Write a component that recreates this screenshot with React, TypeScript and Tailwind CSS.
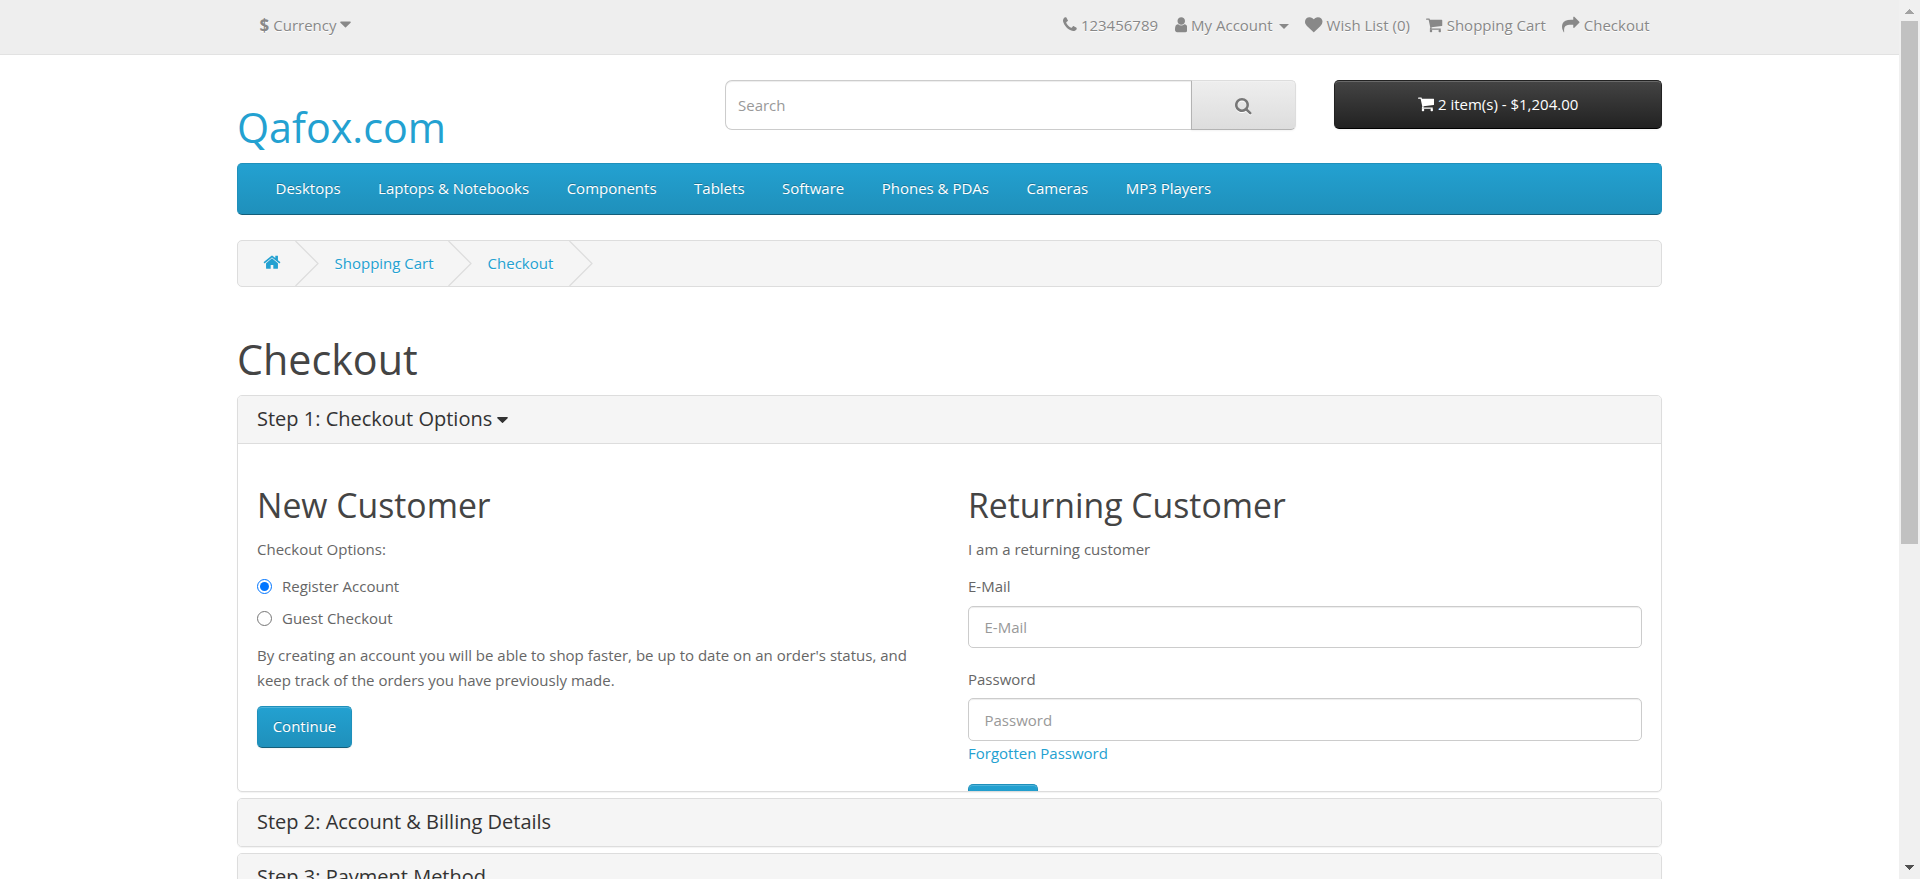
import React from "react";

type IconProps = { box: string; d: string; className: string };

const Icon = ({ box, d, className }: IconProps) => (
  <svg viewBox={box} className={`block shrink-0 ${className}`} fill="currentColor" aria-hidden="true">
    <path d={d} />
  </svg>
);

const PHONE =
  "M1600 1240q0 27-10 70.5t-21 68.5q-21 50-122 106-94 51-186 51-27 0-52.5-3.5t-57.5-12.5-47.5-14.5-55.5-20.5-49-18q-98-35-175-83-128-79-264.5-215.5t-215.5-264.5q-48-77-83-175-3-9-18-49t-20.5-55.5-14.5-47.5-12.5-57.5-3.5-52.5q0-92 51-186 56-101 106-122 25-11 68.5-21t70.5-10q14 0 21 3 18 6 53 76 11 19 30 54t35 63.5 31 53.5q3 4 17.5 25t21.5 35.5 7 28.5q0 20-28.5 50t-62 55-62 53-28.5 46q0 9 5 22.5t8.5 20.5 14 24 11.5 19q76 137 174 235t235 174q2 1 19 11.5t24 14 20.5 8.5 22.5 5q18 0 46-28.5t53-62 55-62 50-28.5q14 0 28.5 7t35.5 21.5 25 17.5q25 15 53.5 31t63.5 35 54 30q70 35 76 53 3 7 3 21z";
const USER =
  "M1536 1399q0 109-62.5 187t-150.5 78h-854q-88 0-150.5-78t-62.5-187q0-85 8.5-160.5t31.5-152 58.5-131 94-89 134.5-34.5q131 128 313 128t313-128q76 0 134.5 34.5t94 89 58.5 131 31.5 152 8.5 160.5zm-256-887q0 159-112.5 271.5t-271.5 112.5-271.5-112.5-112.5-271.5 112.5-271.5 271.5-112.5 271.5 112.5 112.5 271.5z";
const HEART =
  "M896 1664q-26 0-44-18l-624-602q-10-8-27.5-26t-55.5-65.5-68-97.5-53.5-121-23.5-138q0-220 127-344t351-124q62 0 126.5 21.5t120 58 95.5 68.5 76 68q36-36 76-68t95.5-68.5 120-58 126.5-21.5q224 0 351 124t127 344q0 221-229 450l-623 600q-18 18-44 18z";
const CART =
  "M704 1536q0 52-38 90t-90 38-90-38-38-90 38-90 90-38 90 38 38 90zm896 0q0 52-38 90t-90 38-90-38-38-90 38-90 90-38 90 38 38 90zm128-1088v512q0 24-16.5 42.5t-40.5 21.5l-1044 122q13 60 13 70 0 16-24 64h920q26 0 45 19t19 45-19 45-45 19h-1024q-26 0-45-19t-19-45q0-11 8-31.5t16-36 21.5-40 15.5-29.5l-177-823h-204q-26 0-45-19t-19-45 19-45 45-19h256q16 0 28.5 6.5t19.5 15.5 13 24.5 8 26 5.5 29.5 4.5 26h1201q26 0 45 19t19 45z";
const SHARE =
  "M1792 640q0 26-19 45l-512 512q-19 19-45 19t-45-19-19-45v-256h-224q-98 0-175.5 6t-154 21.5-133 42.5-105.5 69.5-80 101-48.5 138.5-17.5 181q0 55 5 123 0 6 2.5 23.5t2.5 26.5q0 15-8.5 25t-23.5 10q-16 0-28-17-7-9-13-22t-13.5-30-10.5-24q-127-285-127-451 0-199 53-333 162-403 875-403h224v-256q0-26 19-45t45-19 45 19l512 512q19 19 19 45z";
const HOME =
  "M1472 992v480q0 26-19 45t-45 19h-384v-384h-256v384h-384q-26 0-45-19t-19-45v-480q0-1 .5-3t.5-3l575-474 575 474q1 2 1 6zm223-69l-62 74q-8 9-21 11h-3q-13 0-21-7l-692-577-692 577q-12 8-24 7-13-2-21-11l-62-74q-8-10-7-23.5t11-21.5l719-599q32-26 76-26t76 26l244 204v-195q0-14 9-23t23-9h192q14 0 23 9t9 23v408l219 182q10 8 11 21.5t-7 23.5z";
const SEARCH =
  "M1216 832q0-185-131.5-316.5t-316.5-131.5-316.5 131.5-131.5 316.5 131.5 316.5 316.5 131.5 316.5-131.5 131.5-316.5zm512 832q0 52-38 90t-90 38q-54 0-90-38l-343-342q-179 124-399 124-143 0-273.5-55.5t-225-150-150-225-55.5-273.5 55.5-273.5 150-225 225-150 273.5-55.5 273.5 55.5 225 150 150 225 55.5 273.5q0 220-124 399l343 343q37 37 37 90z";
const CARET =
  "M1408 704q0 26-19 45l-448 448q-19 19-45 19t-45-19l-448-448q-19-19-19-45t19-45 45-19h896q26 0 45 19t19 45z";

const menu = [
  "Desktops",
  "Laptops & Notebooks",
  "Components",
  "Tablets",
  "Software",
  "Phones & PDAs",
  "Cameras",
  "MP3 Players",
];

const blueButton =
  "rounded-[5px] border border-[#1f90bb] border-b-[#145e7a] bg-linear-to-b from-[#23a1d1] to-[#1f90bb] text-white shadow-[inset_0_1px_0_rgba(255,255,255,0.2),0_1px_2px_rgba(0,0,0,0.05)] [text-shadow:0_-1px_0_rgba(0,0,0,0.25)]";

const fieldClass =
  "block w-full rounded-[5px] border border-[#ccc] bg-white px-[15.5px] text-[15px] text-[#555] shadow-[inset_0_1px_1px_rgba(0,0,0,0.075)] outline-none placeholder:text-[#999]";

const Chevron = () => (
  <svg width="24" height="45" viewBox="0 0 24 45" fill="none" stroke="#ddd" strokeWidth="1.2" className="block shrink-0">
    <path d="M0.5 0L23 22.5L0.5 45" />
  </svg>
);

const TopBar = () => (
  <nav className="h-[55px] border-b border-[#e2e2e2] bg-[#eee] text-[#888] [text-shadow:0_1px_0_#fff]">
    <div className="mx-auto flex w-[1425px] justify-between pt-[13px] pr-[12.5px] pl-[22.5px] leading-[25px]">
      <div className="flex items-center">
        <strong className="mr-[4px] text-[17px] leading-[25px] font-bold">$</strong>
        <span>Currency</span>
        <Icon box="384 0 1024 1792" d={CARET} className="mb-[2px] ml-[3.5px] h-[18.5px] w-[11px]" />
      </div>
      <ul className="flex items-center">
        <li className="flex items-center">
          <Icon box="192 0 1408 1792" d={PHONE} className="mr-[4px] mb-[2px] h-[17.5px] w-[13.75px]" />
          <span>123456789</span>
        </li>
        <li className="ml-[16.5px] flex items-center">
          <Icon box="256 0 1280 1792" d={USER} className="mr-[4px] mb-[2px] h-[17.5px] w-[12.5px]" />
          <span>My Account</span>
          <span className="mt-[1px] ml-[6px] h-0 w-0 border-x-[5px] border-t-[5px] border-x-transparent border-t-[#888]" />
        </li>
        <li className="ml-[16.5px] flex items-center">
          <Icon box="0 0 1792 1792" d={HEART} className="mr-[4px] mb-[2px] h-[17.5px] w-[17.5px]" />
          <span>Wish List (0)</span>
        </li>
        <li className="ml-[16.5px] flex items-center">
          <Icon box="64 0 1664 1792" d={CART} className="mr-[4px] mb-[2px] h-[17.5px] w-[16.25px]" />
          <span>Shopping Cart</span>
        </li>
        <li className="ml-[16.5px] flex items-center">
          <Icon box="0 0 1792 1792" d={SHARE} className="mr-[4px] mb-[2px] h-[17.5px] w-[17.5px]" />
          <span>Checkout</span>
        </li>
      </ul>
    </div>
  </nav>
);

const Header = () => (
  <header className="mx-auto flex h-[108px] w-[1425px] items-start">
    <h1 className="w-[488px] pt-[50px] text-[41.25px] leading-[45px] text-[#23a1d1]">Qafox.com</h1>
    <div className="mt-[25px] flex h-[50px] w-[571px]">
      <input
        placeholder="Search"
        className="h-[50px] w-[466px] rounded-l-[7px] border border-r-0 border-[#ccc] px-[12px] text-[15px] shadow-[inset_0_1px_1px_rgba(0,0,0,0.075)] outline-none placeholder:text-[#999]"
      />
      <button className="flex flex-1 items-center justify-center rounded-r-[5px] border border-[#ddd] border-b-[#b3b3b3] border-l-[#b3b3b3] bg-linear-to-b from-[#eee] to-[#ddd] text-[#777] shadow-[inset_0_1px_0_rgba(255,255,255,0.2),0_1px_2px_rgba(0,0,0,0.05)]">
        <Icon box="64 128 1664 1664" d={SEARCH} className="mt-[3px] h-[16.5px] w-[16.5px] drop-shadow-[0_1px_0_#fff]" />
      </button>
    </div>
    <button className="mt-[25px] ml-auto flex h-[49px] w-[328px] items-center justify-center rounded-[5px] border border-[#222] border-b-black bg-linear-to-b from-[#444] to-[#222] leading-[25px] text-white shadow-[inset_0_1px_0_rgba(255,255,255,0.2),0_1px_2px_rgba(0,0,0,0.05)]">
      <Icon box="64 0 1664 1792" d={CART} className="mr-[4px] mb-[2px] h-[17.5px] w-[16.25px]" />
      <span>2 item(s) - $1,204.00</span>
    </button>
  </header>
);

const Breadcrumb = () => (
  <ul className="mt-[25px] flex h-[47px] items-center rounded-[5px] border border-[#ddd] bg-[#f5f5f5] pl-[25px] text-[#23a1d1] [text-shadow:0_1px_0_#fff]">
    <li className="flex items-center">
      <Icon box="64 0 1664 1792" d={HOME} className="mr-[14px] mb-[2px] h-[18.5px] w-[18px]" />
      <Chevron />
    </li>
    <li className="flex items-center pl-[15.5px]">
      <span className="mr-[14.5px]">Shopping Cart</span>
      <Chevron />
    </li>
    <li className="flex items-center pl-[15.5px]">
      <span className="mr-[15.5px]">Checkout</span>
      <Chevron />
    </li>
  </ul>
);

const panel = "overflow-hidden rounded-[5px] border border-[#ddd] bg-white shadow-[0_1px_1px_rgba(0,0,0,0.05)]";

const ClosedStep = ({ title }: { title: string }) => (
  <section className={`mt-[6px] h-[49px] shrink-0 ${panel}`}>
    <h4 className="h-full bg-[#f5f5f5] pt-[12px] pl-[19px] text-[20px] leading-[22px] text-[#333]">{title}</h4>
  </section>
);

const NewCustomer = () => (
  <div className="w-[674px]">
    <h2 className="text-[33.75px] leading-[37px] text-[#444]">New Customer</h2>
    <p className="mt-[12.5px]">Checkout Options:</p>
    <label className="mt-[12.5px] flex items-center">
      <span className="flex h-[15px] w-[15px] items-center justify-center rounded-full border-[1.5px] border-[#0075ff] bg-white">
        <span className="h-[9px] w-[9px] rounded-full bg-[#0075ff]" />
      </span>
      <span className="ml-[10px]">Register Account</span>
    </label>
    <label className="mt-[7px] flex items-center">
      <span className="h-[15px] w-[15px] rounded-full border border-[#767676] bg-white" />
      <span className="ml-[10px]">Guest Checkout</span>
    </label>
    <p className="mt-[12px]">
      By creating an account you will be able to shop faster, be up to date on an order's status, and keep track of the
      orders you have previously made.
    </p>
    <button className={`mt-[13px] h-[42px] w-[95px] pb-[2px] ${blueButton}`}>Continue</button>
  </div>
);

const ReturningCustomer = () => (
  <div className="w-[674px]">
    <h2 className="text-[33.75px] leading-[37px] text-[#444]">Returning Customer</h2>
    <p className="mt-[12.5px]">I am a returning customer</p>
    <label className="mt-[12.5px] block">E-Mail</label>
    <input placeholder="E-Mail" className={`mt-[7px] h-[42px] ${fieldClass}`} />
    <label className="mt-[19px] block">Password</label>
    <input placeholder="Password" className={`mt-[6px] h-[43px] ${fieldClass}`} />
    <a className="block text-[#23a1d1]">Forgotten Password</a>
    <button className={`mt-[18px] block h-[42px] w-[70px] ${blueButton}`} />
  </div>
);

export default function App() {
  return (
    <div className="flex h-[879px] w-full overflow-hidden bg-white font-['Open_Sans',sans-serif] text-[15px] leading-[25px] font-normal text-[#666]">
      <div className="h-full flex-1 overflow-hidden">
        <TopBar />
        <Header />
        <main className="mx-auto w-[1425px]">
          <nav className="flex h-[52px] items-center rounded-[5px] border border-[#1f90bb] border-b-[#145e7a] bg-linear-to-b from-[#23a1d1] to-[#1f90bb] pb-[2px] pl-[18.75px] text-white [text-shadow:0_-1px_0_rgba(0,0,0,0.25)]">
            {menu.map((label) => (
              <a key={label} className="px-[18.75px]">
                {label}
              </a>
            ))}
          </nav>
          <Breadcrumb />
          <h1 className="mt-[50px] text-[41.25px] leading-[45px] text-[#444]">Checkout</h1>
          <section className={`mt-[13px] h-[397px] ${panel}`}>
            <h4 className="flex h-[48px] border-b border-[#ddd] bg-[#f5f5f5] pt-[12px] pl-[19px] text-[20px] leading-[22px] text-[#333]">
              <span>Step 1: Checkout Options</span>
              <Icon box="384 640 1024 576" d={CARET} className="mt-[9px] ml-[5px] h-[6px] w-[11px]" />
            </h4>
            <div className="flex justify-between px-[19px] pt-[43px]">
              <NewCustomer />
              <ReturningCustomer />
            </div>
          </section>
          <ClosedStep title="Step 2: Account & Billing Details" />
          <ClosedStep title="Step 3: Payment Method" />
        </main>
      </div>
      <aside className="flex h-full w-[21px] flex-col items-center bg-[#f0f0f0]">
        <svg width="9" height="5" viewBox="0 0 9 5" className="mt-[9px] block" fill="#a3a3a3" shapeRendering="crispEdges">
          <path d="M0 5L4.5 0L9 5z" />
        </svg>
        <div className="mt-[7px] h-[523px] w-[17px] bg-[#c1c1c1]" />
        <svg width="9" height="5" viewBox="0 0 9 5" className="mt-auto mb-[9px] block" fill="#505050" shapeRendering="crispEdges">
          <path d="M0 0L4.5 5L9 0z" />
        </svg>
      </aside>
    </div>
  );
}
